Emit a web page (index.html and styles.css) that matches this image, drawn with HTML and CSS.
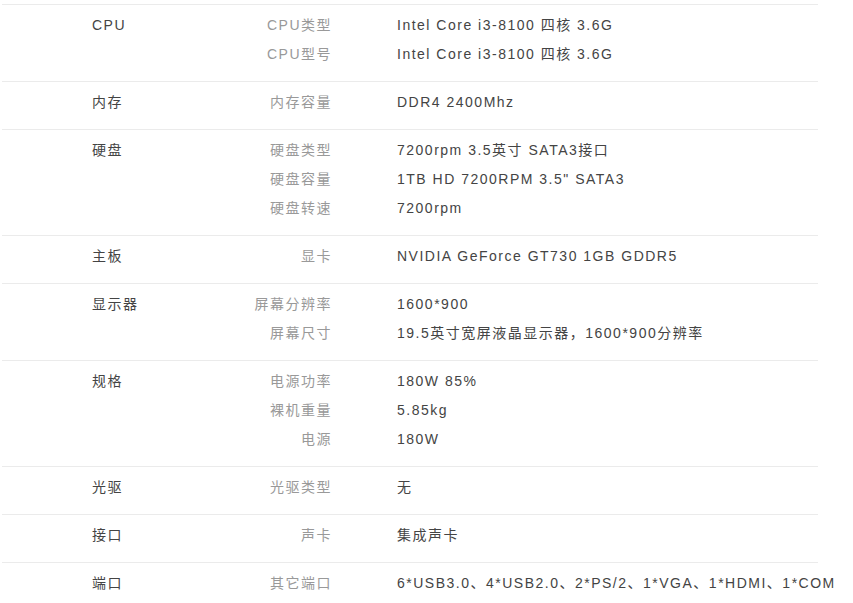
FILE: index.html
```html
<!DOCTYPE html>
<html lang="zh-CN">
<head>
<meta charset="utf-8">
<title>规格参数</title>
<link rel="stylesheet" href="styles.css">
</head>
<body>
<div class="specs">
  <div class="row">
    <div class="group">CPU</div>
    <div class="keys"><div>CPU类型</div><div>CPU型号</div></div>
    <div class="vals"><div>Intel Core i3-8100 四核 3.6G</div><div>Intel Core i3-8100 四核 3.6G</div></div>
  </div>
  <div class="row">
    <div class="group">内存</div>
    <div class="keys"><div>内存容量</div></div>
    <div class="vals"><div>DDR4 2400Mhz</div></div>
  </div>
  <div class="row">
    <div class="group">硬盘</div>
    <div class="keys"><div>硬盘类型</div><div>硬盘容量</div><div>硬盘转速</div></div>
    <div class="vals"><div>7200rpm 3.5英寸 SATA3接口</div><div>1TB HD 7200RPM 3.5" SATA3</div><div>7200rpm</div></div>
  </div>
  <div class="row">
    <div class="group">主板</div>
    <div class="keys"><div>显卡</div></div>
    <div class="vals"><div>NVIDIA GeForce GT730 1GB GDDR5</div></div>
  </div>
  <div class="row">
    <div class="group">显示器</div>
    <div class="keys"><div>屏幕分辨率</div><div>屏幕尺寸</div></div>
    <div class="vals"><div>1600*900</div><div>19.5英寸宽屏液晶显示器，1600*900分辨率</div></div>
  </div>
  <div class="row">
    <div class="group">规格</div>
    <div class="keys"><div>电源功率</div><div>裸机重量</div><div>电源</div></div>
    <div class="vals"><div>180W 85%</div><div>5.85kg</div><div>180W</div></div>
  </div>
  <div class="row">
    <div class="group">光驱</div>
    <div class="keys"><div>光驱类型</div></div>
    <div class="vals"><div>无</div></div>
  </div>
  <div class="row">
    <div class="group">接口</div>
    <div class="keys"><div>声卡</div></div>
    <div class="vals"><div>集成声卡</div></div>
  </div>
  <div class="row">
    <div class="group">端口</div>
    <div class="keys"><div>其它端口</div></div>
    <div class="vals"><div>6*USB3.0、4*USB2.0、2*PS/2、1*VGA、1*HDMI、1*COM</div></div>
  </div>
</div>
</body>
</html>
```

FILE: styles.css
```css
html, body {
  margin: 0;
  padding: 0;
  background: #fff;
}
body {
  font-family: "Liberation Sans", "Noto Sans CJK SC", sans-serif;
  font-size: 14px;
  letter-spacing: 1.5px;
  color: #444;
  overflow: hidden;
}
.specs {
  width: 816px;
  margin-left: 2px;
  padding-top: 4px;
}
.row {
  display: flex;
  border-top: 1px solid #ebebeb;
  padding: 6px 0 12px 90px;
  line-height: 29px;
}
.group {
  width: 100px;
  flex: none;
  color: #444;
}
.keys {
  width: 140px;
  flex: none;
  text-align: right;
  color: #999;
}
.vals {
  margin-left: 65px;
  flex: 1;
  white-space: nowrap;
  color: #444;
}
```
